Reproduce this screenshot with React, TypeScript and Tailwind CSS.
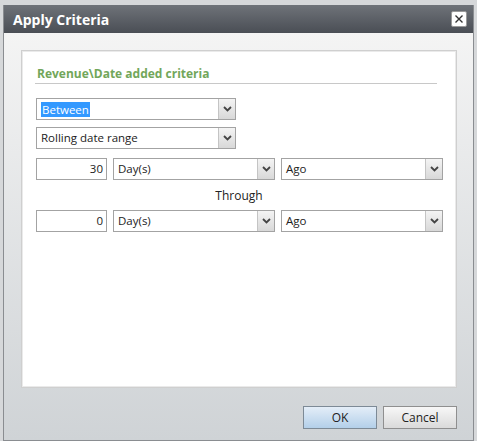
import React from "react";

const font = { fontFamily: '"Open Sans", "Noto Sans", sans-serif' };

function Chevron() {
  return (
    <svg width="9" height="6" viewBox="0 0 9 6" className="block">
      <path d="M1 1 L4.5 4.5 L8 1" fill="none" stroke="#444" strokeWidth="1.8" />
    </svg>
  );
}

function Select({ value, highlight, className }: { value: string; highlight?: boolean; className: string }) {
  return (
    <div className={`flex h-[22px] border border-[#a3a3a3] bg-white ${className}`}>
      <div className="flex flex-1 items-center pl-[4px] text-[11.5px] text-[#222]">
        {highlight ? (
          <span className="bg-[#3399ff] px-px leading-[15px] text-white">{value}</span>
        ) : (
          <span>{value}</span>
        )}
      </div>
      <div className="flex w-[17px] items-center justify-center border-l border-[#c4c4c4] bg-gradient-to-b from-[#f4f4f4] to-[#d8d8d8]">
        <Chevron />
      </div>
    </div>
  );
}

function NumberBox({ value }: { value: string }) {
  return (
    <div className="flex h-[22px] w-[71px] items-center justify-end border border-[#a3a3a3] bg-white pr-[3px] text-[11.5px] text-[#222]">
      {value}
    </div>
  );
}

function RangeRow({ amount }: { amount: string }) {
  return (
    <div className="flex gap-[6px]">
      <NumberBox value={amount} />
      <Select value="Day(s)" className="w-[162px]" />
      <Select value="Ago" className="w-[162px]" />
    </div>
  );
}

export default function App() {
  return (
    <div className="h-[441px] w-[477px] overflow-hidden bg-[#d6d8da] pl-[3px] pt-[5px]" style={font}>
      <div className="flex h-[436px] w-[471px] flex-col border border-[#8a8d91] border-t-0">
        <div className="flex h-[28px] items-center justify-between bg-gradient-to-b from-[#6f7379] to-[#4a4e55] pl-[9px] pr-[6px]">
          <span className="text-[14px] font-bold text-white">Apply Criteria</span>
          <div className="flex h-[16px] w-[16px] items-center justify-center rounded-[2px] border border-[#9a9a9a] bg-white">
            <svg width="10" height="10" viewBox="0 0 10 10">
              <path d="M1.5 1.5 L8.5 8.5 M8.5 1.5 L1.5 8.5" stroke="#333" strokeWidth="1.4" />
            </svg>
          </div>
        </div>

        <div className="flex flex-1 flex-col bg-gradient-to-b from-[#f4f4f4] to-[#cfd3d6] pl-[17px] pr-[16px] pt-[17px]">
          <div className="h-[338px] w-[436px] border border-[#cfcfcf] bg-white p-px shadow-[inset_0_0_0_1px_#eaeaea]">
            <div className="pl-[12px] pt-[14px]">
              <div className="w-[402px] border-b border-[#c8c8c8] pb-[1px] pl-[2px] text-[12px] font-bold leading-[16px] text-[#72a65a]">
                Revenue\Date added criteria
              </div>
              <div className="pl-[1px]">
                <div className="mt-[14px] flex flex-col gap-[7px]">
                  <Select value="Between" highlight className="w-[200px]" />
                  <Select value="Rolling date range" className="w-[200px]" />
                  <div className="mt-[2px]">
                    <RangeRow amount="30" />
                  </div>
                </div>
                <div className="w-[406px] pb-[6px] pt-[7px] text-center text-[12px] leading-[17px] text-[#222]">
                  Through
                </div>
                <RangeRow amount="0" />
              </div>
            </div>
          </div>
          <div className="mt-[18px] flex justify-end gap-[6px]">
            <button className="h-[23px] w-[74px] border border-[#7d8a96] bg-gradient-to-b from-[#e4eef8] to-[#b3cfe9] text-[12px] text-[#222]">
              OK
            </button>
            <button className="h-[23px] w-[74px] border border-[#8f8f8f] bg-gradient-to-b from-[#f7f7f7] to-[#dadada] text-[12px] text-[#222]">
              Cancel
            </button>
          </div>
        </div>
      </div>
    </div>
  );
}
